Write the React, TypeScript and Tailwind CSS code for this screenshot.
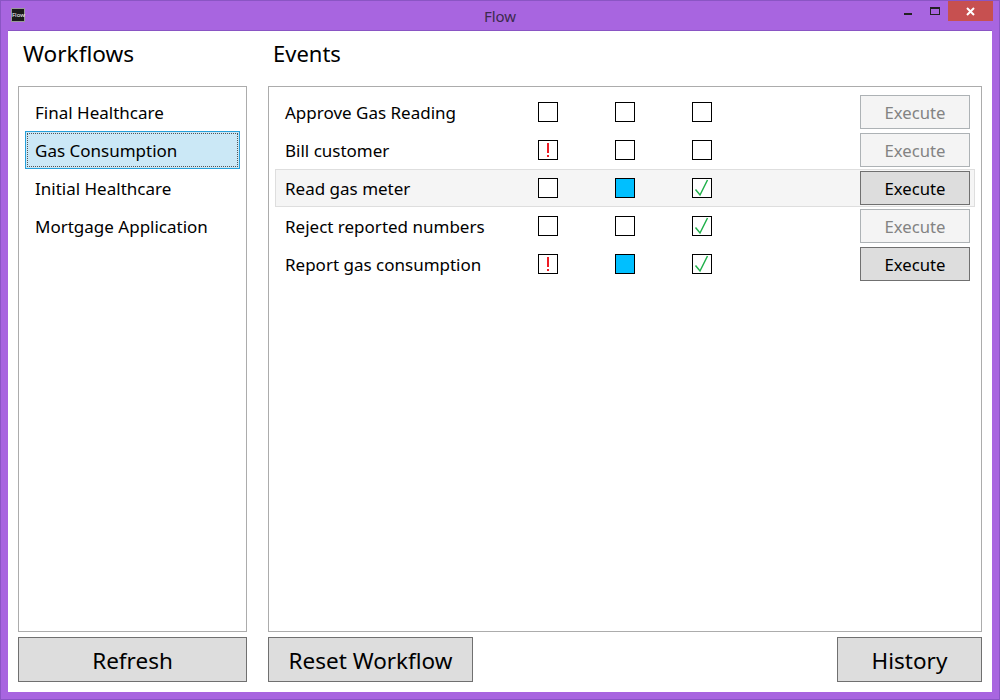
const ff = "font-['Noto_Sans','Open_Sans',sans-serif]";

function Box({ kind, fill, check }: { kind?: boolean; fill?: boolean; check?: boolean }) {
  return (
    <div className={`w-5 h-5 border border-black box-border flex items-center justify-center ${fill ? "bg-[#00bfff]" : "bg-white"}`}>
      {kind && (
        <svg width="18" height="18" viewBox="0 0 18 18">
          <path d="M9 2V12" stroke="#ed1c24" strokeWidth="2" fill="none" />
          <path d="M8 14h2v2H8z" fill="#ed1c24" />
        </svg>
      )}
      {check && (
        <svg width="18" height="18" viewBox="0 0 18 18">
          <path d="M2.5 10.5L7 16 14.5 1" stroke="#22b14c" strokeWidth="1.5" fill="none" />
        </svg>
      )}
    </div>
  );
}

const rows = [
  { n: "Approve Gas Reading", a: false, b: false, c: false, e: false },
  { n: "Bill customer", a: true, b: false, c: false, e: false },
  { n: "Read gas meter", a: false, b: true, c: true, e: true, h: true },
  { n: "Reject reported numbers", a: false, b: false, c: true, e: false },
  { n: "Report gas consumption", a: true, b: true, c: true, e: true },
];

export default function App() {
  return (
    <div className={`w-[1000px] h-[700px] box-border border border-[#8a55c4] bg-[#a865e0] flex flex-col overflow-hidden ${ff} text-black`}>
      <div className="h-[29px] shrink-0 flex items-start">
        <div className="w-[200px]">
          <div className="ml-[10px] mt-[7px] w-[14px] h-[14px] bg-[#1a1a1a] border border-[#999] text-white text-[6px] leading-[12px] text-center">Flow</div>
        </div>
        <div className="flex-1 text-center text-[15px] leading-[30px] text-[#3c2a4e]">Flow</div>
        <div className="w-[200px] flex justify-end items-start">
          <div className="w-[8px] h-[2px] bg-[#222] mt-[12px] mr-[18px]"></div>
          <div className="w-[10px] h-[8px] border border-[#222] border-t-2 box-border mt-[6px] mr-[8px]"></div>
          <div className="w-[45px] h-[20px] bg-[#c75050] flex items-center justify-center mr-[6px]">
            <svg width="9" height="9" viewBox="0 0 9 9"><path d="M1 1l7 7M8 1L1 8" stroke="#fff" strokeWidth="2" fill="none" /></svg>
          </div>
        </div>
      </div>
      <div className="mx-[7px] mb-[7px] flex-1 bg-white border-t border-[#8a55c4] flex flex-col px-[10px] min-h-0">
        <div className="flex-1 flex gap-[21px] min-h-0">
          <div className="w-[229px] flex flex-col">
            <div className="h-[55px] pl-[5px] text-[22.6px] leading-[46px]">Workflows</div>
            <div className="flex-1 border border-[#acacac] pt-[6px] px-[6px] text-[17px]">
              <div className="h-[38px] pl-[10px] leading-[40px]">Final Healthcare</div>
              <div className="h-[38px] border border-[#26a0da] bg-[#cbe8f6] p-[1px] box-border">
                <div className="h-full border border-dotted border-[#555] pl-[7px] leading-[34px]">Gas Consumption</div>
              </div>
              <div className="h-[38px] pl-[10px] leading-[40px]">Initial Healthcare</div>
              <div className="h-[38px] pl-[10px] leading-[40px]">Mortgage Application</div>
            </div>
          </div>
          <div className="flex-1 flex flex-col">
            <div className="h-[55px] pl-[5px] text-[22px] leading-[44px]">Events</div>
            <div className="flex-1 border border-[#acacac] pt-[6px] px-[6px] text-[17px]">
              {rows.map((r) => (
                <div key={r.n} className={`h-[38px] box-border flex items-center pl-[9px] pr-[4px] border ${r.h ? "bg-[#f5f5f5] border-[#dedede]" : "border-transparent"}`}>
                  <div className="w-[253px] pt-[2px]">{r.n}</div>
                  <div className="w-[77px]"><Box kind={r.a} /></div>
                  <div className="w-[77px]"><Box fill={r.b} /></div>
                  <div className="w-[20px]"><Box check={r.c} /></div>
                  <div className={`ml-auto w-[110px] h-[34px] box-border border flex items-center justify-center pt-[2px] text-[16.7px] ${r.e ? "bg-[#dddddd] border-[#707070]" : "bg-[#f4f4f4] border-[#adb2b5] text-[#838383]"}`}>Execute</div>
                </div>
              ))}
            </div>
          </div>
        </div>
        <div className="h-[60px] shrink-0 pt-[5px] pb-[10px] flex text-[22.5px]">
          <div className="w-[229px] border border-[#707070] bg-[#dddddd] flex items-center justify-center pt-[2px]">Refresh</div>
          <div className="ml-[21px] w-[205px] border border-[#707070] bg-[#dddddd] flex items-center justify-center pt-[2px]">Reset Workflow</div>
          <div className="ml-auto w-[145px] border border-[#707070] bg-[#dddddd] flex items-center justify-center pt-[2px]">History</div>
        </div>
      </div>
    </div>
  );
}
